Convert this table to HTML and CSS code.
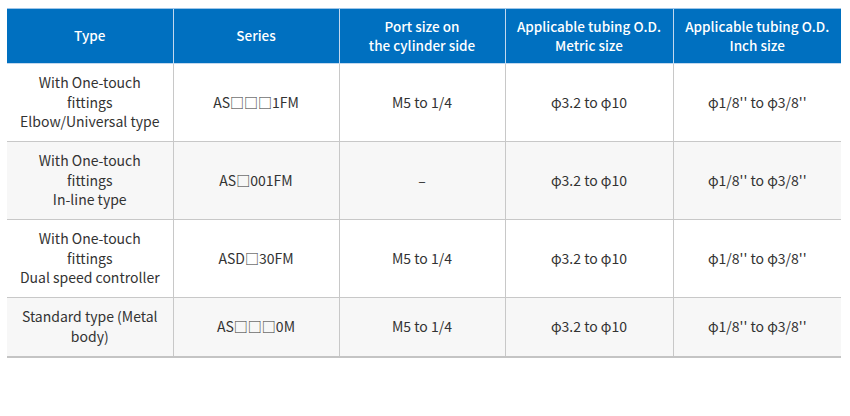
FILE: index.html
```html
<!DOCTYPE html>
<html lang="en">
<head>
<meta charset="utf-8">
<link rel="stylesheet" href="styles.css">
</head>
<body>
<table class="spec">
  <colgroup>
    <col class="c1"><col class="c2"><col class="c3"><col class="c4"><col class="c5">
  </colgroup>
  <thead>
    <tr>
      <th>Type</th>
      <th>Series</th>
      <th>Port size on<br>the cylinder side</th>
      <th>Applicable tubing O.D.<br>Metric size</th>
      <th>Applicable tubing O.D.<br>Inch size</th>
    </tr>
  </thead>
  <tbody>
    <tr>
      <td>With One-touch<br>fittings<br>Elbow/Universal type</td>
      <td>AS□□□1FM</td>
      <td>M5 to 1/4</td>
      <td>φ3.2 to φ10</td>
      <td>φ1/8'' to φ3/8''</td>
    </tr>
    <tr class="alt">
      <td>With One-touch<br>fittings<br>In-line type</td>
      <td>AS□001FM</td>
      <td>–</td>
      <td>φ3.2 to φ10</td>
      <td>φ1/8'' to φ3/8''</td>
    </tr>
    <tr>
      <td>With One-touch<br>fittings<br>Dual speed controller</td>
      <td>ASD□30FM</td>
      <td>M5 to 1/4</td>
      <td>φ3.2 to φ10</td>
      <td>φ1/8'' to φ3/8''</td>
    </tr>
    <tr class="alt">
      <td>Standard type (Metal<br>body)</td>
      <td>AS□□□0M</td>
      <td>M5 to 1/4</td>
      <td>φ3.2 to φ10</td>
      <td>φ1/8'' to φ3/8''</td>
    </tr>
  </tbody>
</table>
</body>
</html>
```

FILE: styles.css
```css
html, body {
  margin: 0;
  padding: 0;
  background: #ffffff;
}
body {
  padding: 8px 9px 0 7px;
  font-family: "Noto Sans CJK JP", "Noto Sans", sans-serif;
  font-size: 14px;
  color: #333333;
}
.spec {
  width: 834px;
  border-collapse: collapse;
  table-layout: fixed;
}
.c1, .c2, .c3 { width: 166px; }
.c4, .c5 { width: 168px; }
.spec th {
  background: #0070c0;
  color: #ffffff;
  font-size: 13.5px;
  font-weight: 500;
  line-height: 19.5px;
  height: 54px;
  padding: 0 6px;
  text-align: center;
  vertical-align: middle;
  border-top: 1px solid #9ec5e8;
  border-left: 1px solid #c2d8ee;
  border-bottom: 1px solid #c2d8ee;
}
.spec th:first-child { border-left: none; }
.spec td {
  line-height: 19.5px;
  padding: 9.25px 6px;
  text-align: center;
  vertical-align: middle;
  border-left: 1px solid #c8c8c8;
  border-bottom: 1px solid #c8c8c8;
  background: #ffffff;
}
.spec td:first-child { border-left: none; }
.spec tr.alt td { background: #f7f7f7; }
.spec tbody tr:last-child td { border-bottom: 2px solid #c4c4c4; }
```
